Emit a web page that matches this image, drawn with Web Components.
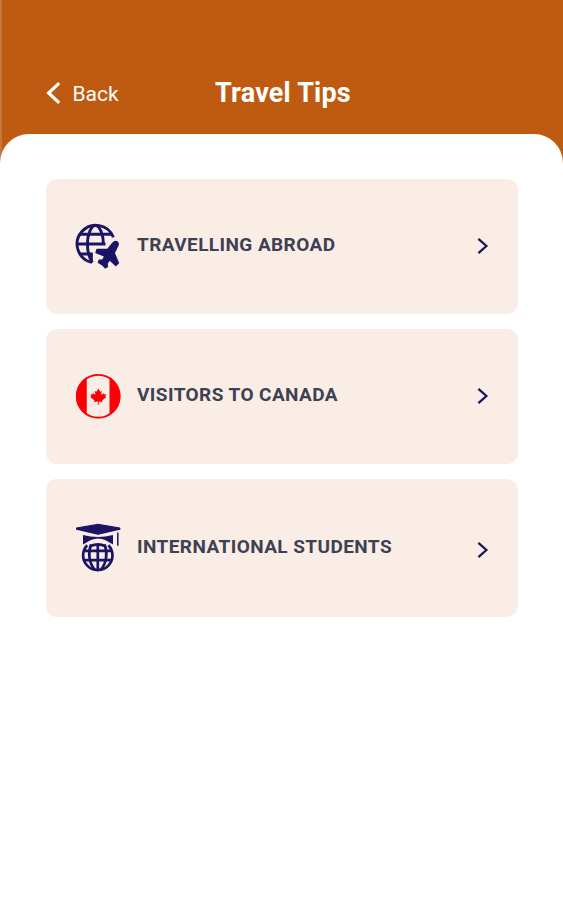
<!DOCTYPE html>
<html lang="en">
<head>
<meta charset="utf-8">
<title>Travel Tips</title>
<style>
  body {
    margin: 0;
    background: #fff;
    font-family: Roboto, "Liberation Sans", sans-serif;
  }
</style>
</head>
<body>
<tips-page>
  <tips-header slot="header" back="Back">Travel Tips</tips-header>
  <tip-card icon="abroad">TRAVELLING ABROAD</tip-card>
  <tip-card icon="canada">VISITORS TO CANADA</tip-card>
  <tip-card icon="students" tall>INTERNATIONAL STUDENTS</tip-card>
</tips-page>

<script>
const icons = {
  // globe, open at the lower right where the plane flies over it
  abroad: `
    <g fill="none" stroke="#1b1464" stroke-width="2.9">
      <path d="M47.4 23.2A18.8 18.8 0 1 0 25.6 48.4"/>
      <path d="M21.4 30C21.4 21 25 11.6 29.4 11.6S37.4 21 37.4 30"/>
      <path d="M21.4 30C21.4 38 23.2 44 26.4 48.6"/>
      <path d="M13.6 20.3h32M11 30h28.5M13.8 40h11.6v7.6"/>
    </g>
    <path d="M41.6 35.4L46.6 29.2Q49.3 26.4 51.3 28Q53.2 29.7 51.2 33L48.2 39L52.4 49L49.8 51.4L43.6 45.8L41 49.6L41.4 52.6L39.2 53.8L36.2 50.6L32.4 48.4L33.2 46.2L36.6 46L38.9 42.2L30 38.6L31 35.4z"
      fill="#1b1464" stroke="#1b1464" stroke-width="1.4" stroke-linejoin="round"/>`,
  canada: `
    <clipPath id="disc"><circle cx="32.2" cy="32.3" r="22.2"/></clipPath>
    <g clip-path="url(#disc)">
      <path fill="#fb0007" d="M9 9h46v46H9z"/>
      <path fill="#f9ede6" d="M20.8 9h22.7v46H20.8z"/>
    </g>
    <circle cx="32.2" cy="32.3" r="21.4" fill="none" stroke="#fb0007" stroke-width="1.8"/>
    <path fill="#fb0007" d="M32.3 24.5l1.8 3.2 1.7-.8-.7 4.2 2.2-2 .5 1.3 2.3-.4-.8 2.4 1 .7-4.2 3.5.4 1.4-3.8-.5.1 3.2h-1l.1-3.2-3.8.5.4-1.4-4.2-3.5 1-.7-.8-2.4 2.3.4.5-1.3 2.2 2-.7-4.2 1.7.8z"/>`,
  // mortarboard sitting on a globe
  students: `
    <path fill="#1b1464" stroke="#1b1464" stroke-width="1.2" stroke-linejoin="round"
      d="M32 10.4L53.8 14v1.2L32 20.2L10.6 15.2V14z"/>
    <path fill="#1b1464" d="M17 21Q32 25 47 21V30.4L39.6 26.2Q32 23 24.4 26.2L17 30.4z"/>
    <g fill="none" stroke="#1b1464" stroke-width="2.7">
      <path d="M21.2 31.2A14.7 14.7 0 1 0 42.4 31.2"/>
      <path d="M25 30.4C22 38 22.6 49 29 56M38.6 30.4C41.6 38 41 49 34.6 56M31.8 30v26.6"/>
      <path d="M18 36.8h27.6M18 46.2h27.6"/>
      <path d="M24.6 32Q32 28.6 39.2 32"/>
    </g>
    <path fill="none" stroke="#1b1464" stroke-width="1.5" d="M51.8 18.5v13.3"/>`
};

class TipsPage extends HTMLElement {
  constructor() {
    super();
    this.attachShadow({ mode: 'open' });
    this.shadowRoot.innerHTML = `
    <style>
      :host {
        display: flex;
        flex-direction: column;
        min-height: 900px;
        background: linear-gradient(90deg, #c8763c 2px, #bf5b10 2px) 0 0 / 100% 165px no-repeat;
      }
      main {
        flex: 1;
        display: flex;
        flex-direction: column;
        gap: 15px;
        box-sizing: border-box;
        padding: 45px 45.5px 0 46px;
        border-radius: 29px 29px 0 0;
        background: #fff;
      }
    </style>
    <slot name="header"></slot>
    <main><slot></slot></main>`;
  }
}

class TipsHeader extends HTMLElement {
  constructor() {
    super();
    this.attachShadow({ mode: 'open' });
  }

  connectedCallback() {
    this.shadowRoot.innerHTML = `
    <style>
      :host {
        display: grid;
        grid-template-columns: 169px 1fr;
        align-items: center;
        box-sizing: border-box;
        height: 134px;
        padding: 52px 46px 0;
        color: #fff;
      }
      .back {
        display: flex;
        align-items: center;
        gap: 10.5px;
        font-size: 21px;
        line-height: 24px;
      }
      .back span {
        padding-top: 2px;
      }
      h1 {
        margin: 0;
        font-size: 27px;
        letter-spacing: 0.2px;
        line-height: 30px;
        font-weight: 700;
      }
    </style>
    <div class="back">
      <svg width="16" height="24" viewBox="0 0 16 24"><path d="M13.2 2.2L2.6 12L13.2 21.8" fill="none" stroke="#fff" stroke-width="3.2"/></svg>
      <span>${this.getAttribute('back')}</span>
    </div>
    <h1><slot></slot></h1>`;
  }
}

class TipCard extends HTMLElement {
  constructor() {
    super();
    this.attachShadow({ mode: 'open' });
  }

  connectedCallback() {
    this.shadowRoot.innerHTML = `
    <style>
      :host {
        display: flex;
        align-items: flex-start;
        box-sizing: border-box;
        height: 135px;
        padding: 35px 28px 0 20px;
        border-radius: 11px;
        background: #f9ede6;
        color: #3d4152;
        font-size: 19px;
        font-weight: 700;
        letter-spacing: 0.42px;
      }
      :host([tall]) {
        height: 138px;
      }
      .label {
        flex: 1;
        margin: 19px 0 0 7px;
        line-height: 24px;
        white-space: nowrap;
      }
      .chevron {
        margin-top: 21.5px;
      }
      :host([tall]) .label {
        margin-top: 21px;
      }
      :host([tall]) .chevron {
        margin-top: 26px;
      }
    </style>
    <svg width="64" height="64" viewBox="0 0 64 64">${icons[this.getAttribute('icon')]}</svg>
    <div class="label"><slot></slot></div>
    <svg class="chevron" width="14" height="20" viewBox="0 0 14 20"><path d="M2.4 2.8L10.4 10L2.4 17.2" fill="none" stroke="#1b1464" stroke-width="2.3"/></svg>`;
  }
}

customElements.define('tips-page', TipsPage);
customElements.define('tips-header', TipsHeader);
customElements.define('tip-card', TipCard);
</script>
</body>
</html>
